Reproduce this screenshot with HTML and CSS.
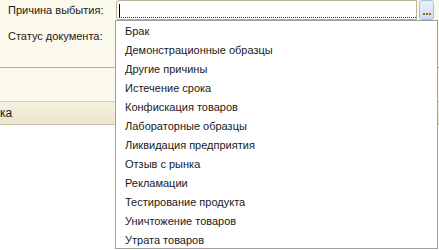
FILE: index.html
```html
<!DOCTYPE html>
<html lang="ru">
<head>
<meta charset="utf-8">
<link rel="stylesheet" href="styles.css">
</head>
<body>
<div class="form">
  <div class="row row-first">
    <span class="label">Причина выбытия:</span>
    <div class="field">
      <div class="input"><span class="caret"></span><span class="dots"></span></div>
      <div class="btn"><span></span><span></span><span></span></div>
    </div>
  </div>
  <div class="row">
    <span class="label">Статус документа:</span>
  </div>
  <div class="sep"></div>
  <div class="spacer"></div>
  <div class="band"><span class="band-text">ка</span></div>
  <div class="white"></div>
</div>
<ul class="dropdown">
  <li>Брак</li>
  <li>Демонстрационные образцы</li>
  <li>Другие причины</li>
  <li>Истечение срока</li>
  <li>Конфискация товаров</li>
  <li>Лабораторные образцы</li>
  <li>Ликвидация предприятия</li>
  <li>Отзыв с рынка</li>
  <li>Рекламации</li>
  <li>Тестирование продукта</li>
  <li>Уничтожение товаров</li>
  <li>Утрата товаров</li>
</ul>
</body>
</html>
```
FILE: styles.css
```css
html, body {
  margin: 0;
  padding: 0;
  width: 439px;
  height: 250px;
  overflow: hidden;
}
body {
  position: relative;
  background: #fbf8ec;
  font-family: "Liberation Sans", Arial, sans-serif;
  font-size: 11px;
  color: #1a1a1a;
}
.form {
  display: flex;
  flex-direction: column;
  height: 250px;
}
.row {
  display: flex;
  align-items: flex-start;
  height: 24px;
}
.label {
  width: 108px;
  padding-left: 8px;
  line-height: 21px;
  flex: none;
}
.row + .row .label {
  padding-top: 2px;
}
.field {
  display: flex;
  gap: 2px;
  height: 20px;
}
.input {
  position: relative;
  width: 299px;
  height: 18px;
  border: 1px solid #b9b39c;
  border-radius: 3px 0 0 3px;
  background: #fff;
}
.caret {
  position: absolute;
  left: 2px;
  top: 3px;
  width: 1px;
  height: 13px;
  background: #000;
}
.dots {
  position: absolute;
  left: 2px;
  right: 0;
  top: 16px;
  border-bottom: 1px dotted #d00000;
}
.btn {
  width: 15px;
  border: 1px solid #a9bde0;
  border-radius: 3px;
  background: linear-gradient(#eaf1fd, #cddcf5);
  display: flex;
  justify-content: center;
  align-items: flex-end;
  gap: 1px;
  padding-bottom: 4px;
  box-sizing: border-box;
  height: 20px;
}
.btn span {
  width: 2px;
  height: 2px;
  background: #8a6a1c;
}
.sep {
  height: 1px;
  background: #b4ae98;
  margin-top: 19px;
}
.spacer {
  height: 33px;
}
.band {
  height: 24px;
  border-top: 1px solid #d6d0bb;
  border-bottom: 1px solid #c8c2ac;
  background: linear-gradient(#f6f2e2, #ece5cc);
  box-sizing: border-box;
  display: flex;
  align-items: center;
  font-size: 12px;
}
.band-text {
  margin-left: 0;
}
.white {
  flex: 1;
  background: #fff;
}
.dropdown {
  position: absolute;
  left: 115px;
  top: 20px;
  width: 323px;
  height: 229px;
  margin: 0;
  padding: 0;
  list-style: none;
  background: #fff;
  border: 1px solid #a0a0a0;
  box-sizing: border-box;
}
.dropdown li {
  height: 19px;
  line-height: 20px;
  padding-left: 9px;
  white-space: nowrap;
}
```
